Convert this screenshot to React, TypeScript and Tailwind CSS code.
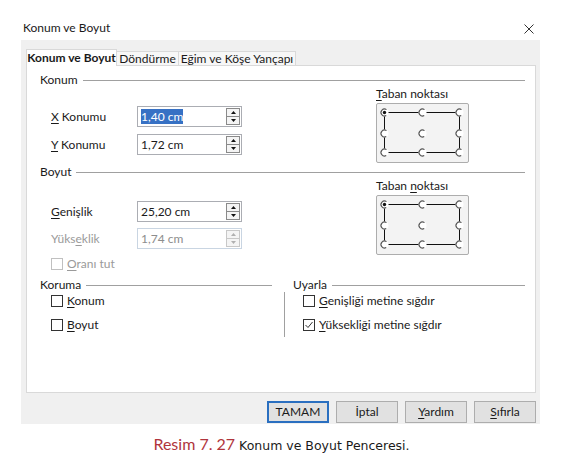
import React from "react";

const Ul = ({ children }: { children: React.ReactNode }) => (
  <span className="underline decoration-1 underline-offset-[2px]">{children}</span>
);

function Header({ label, gap }: { label: React.ReactNode; gap?: string }) {
  return (
    <div className="flex items-center h-[14px]">
      <span>{label}</span>
      <div className={"flex-1 h-px bg-[#a0a0a0] " + (gap ?? "ml-[5px]")} />
    </div>
  );
}

function SpinBox({ value, selected, disabled }: { value: string; selected?: boolean; disabled?: boolean }) {
  const bc = disabled ? "border-[#c8c8c8]" : "border-[#8a8a8a]";
  const tri = disabled ? "#b0b0b0" : "#111111";
  return (
    <div
      className={
        "w-[105px] h-[21px] bg-white border flex items-center pl-[3px] pr-[1px] " +
        (disabled ? "border-[#c9d5e2]" : "border-[#abadb3]")
      }
    >
      <span
        className={
          selected
            ? "bg-[#3771c4] text-white h-[15px] leading-[15px]"
            : disabled
            ? "text-[#8d8d8d]"
            : ""
        }
      >
        {value}
      </span>
      <div className={"ml-auto w-[14px] h-[17px] border flex flex-col bg-[#f4f4f4] " + bc}>
        <div className={"flex-1 flex items-center justify-center border-b " + bc}>
          <svg width="5" height="3" viewBox="0 0 5 3">
            <path d="M0 3L2.5 0L5 3Z" fill={tri} />
          </svg>
        </div>
        <div className="flex-1 flex items-center justify-center">
          <svg width="5" height="3" viewBox="0 0 5 3">
            <path d="M0 0L2.5 3L5 0Z" fill={tri} />
          </svg>
        </div>
      </div>
    </div>
  );
}

function Field({
  label,
  value,
  selected,
  disabled,
}: {
  label: React.ReactNode;
  value: string;
  selected?: boolean;
  disabled?: boolean;
}) {
  return (
    <div className="flex items-center h-[21px]">
      <div className={"w-[86px] " + (disabled ? "text-[#9a9a9a]" : "")}>{label}</div>
      <SpinBox value={value} selected={selected} disabled={disabled} />
    </div>
  );
}

function Radio({ cx, cy, selected }: { cx: number; cy: number; selected?: boolean }) {
  const r = 3.5;
  const a0 = (60 * Math.PI) / 180;
  const a1 = (305 * Math.PI) / 180;
  const sx = cx + r * Math.cos(a0);
  const sy = cy + r * Math.sin(a0);
  const ex = cx + r * Math.cos(a1);
  const ey = cy + r * Math.sin(a1);
  return (
    <g>
      <circle cx={cx} cy={cy} r={4} fill="#ffffff" />
      <path d={`M${sx} ${sy} A${r} ${r} 0 1 1 ${ex} ${ey}`} fill="none" stroke="#555555" strokeWidth="1.1" />
      {selected && <circle cx={cx} cy={cy} r={1.7} fill="#111111" />}
    </g>
  );
}

function Taban() {
  const xs = [7, 45, 82];
  const ys = [8, 29, 48];
  return (
    <div className="mt-[2px] w-[93px] h-[60px] border border-[#adadad] rounded-[2px] bg-[#f3f3f3]">
      <svg width="91" height="58" viewBox="0 0 91 58">
        <rect x="7.5" y="8.5" width="75" height="40" fill="none" stroke="#111111" strokeWidth="1" />
        {ys.map((y, j) =>
          xs.map((x, i) => <Radio key={`${i}-${j}`} cx={x + 0.5} cy={y + 0.5} selected={i === 0 && j === 0} />)
        )}
      </svg>
    </div>
  );
}

function Check({
  label,
  checked,
  disabled,
}: {
  label: React.ReactNode;
  checked?: boolean;
  disabled?: boolean;
}) {
  return (
    <div className="flex items-center h-[16px]">
      <div
        className={
          "w-[12px] h-[12px] border bg-white flex items-center justify-center " +
          (disabled ? "border-[#c0c0c0]" : "border-[#333333]")
        }
      >
        {checked && (
          <svg width="10" height="10" viewBox="0 0 10 10">
            <path d="M1.5 5L4 7.5L8.5 2" fill="none" stroke="#333333" strokeWidth="1" />
          </svg>
        )}
      </div>
      <span className={"ml-[4px] " + (disabled ? "text-[#9a9a9a]" : "")}>{label}</span>
    </div>
  );
}

function Button({ children, primary }: { children: React.ReactNode; primary?: boolean }) {
  return (
    <div
      className={
        "w-[62px] h-[22px] bg-[#e1e1e1] flex items-center justify-center " +
        (primary ? "border-2 border-[#2a6fc0]" : "border border-[#adadad]")
      }
    >
      {children}
    </div>
  );
}

export default function App() {
  return (
    <div className="w-[563px] h-[462px] bg-white font-['Lato',_sans-serif] text-[12px] leading-[14px] text-[#1a1a1a] overflow-hidden">
      {/* title bar */}
      <div className="h-[40px] flex items-start justify-between pl-[23px] pr-[29px] pt-[21px]">
        <span>Konum ve Boyut</span>
        <svg className="mt-[3px]" width="10" height="10" viewBox="0 0 10 10">
          <path d="M0.5 0.5L9.5 9.5M9.5 0.5L0.5 9.5" stroke="#333333" strokeWidth="1" />
        </svg>
      </div>

      {/* dialog body */}
      <div className="ml-[21px] w-[519px] h-[384px] bg-[#f0f0f0] flex flex-col pl-[5px] pr-[4px]">
        {/* tabs */}
        <div className="flex items-end pt-[9px]">
          <div className="relative z-10 -mb-px h-[17px] w-[91px] bg-white border border-b-0 border-[#d9d9d9] flex items-center justify-center font-bold">
            Konum ve Boyut
          </div>
          <div className="h-[14px] w-[62px] bg-[#f7f7f7] border border-l-0 border-b-0 border-[#d9d9d9] flex items-center justify-center">
            Döndürme
          </div>
          <div className="h-[14px] w-[117px] bg-[#f7f7f7] border border-l-0 border-b-0 border-[#d9d9d9] flex items-center justify-center">
            Eğim ve Köşe Yançapı
          </div>
        </div>

        {/* panel */}
        <div className="h-[328px] w-[510px] bg-white border border-[#d9d9d9] pl-[13px] pr-[10px] pt-[7px] flex flex-col">
          {/* Konum */}
          <Header label="Konum" />
          <div className="flex">
            <div className="w-[336px] pl-[11px] pt-[19px] flex flex-col gap-[7px]">
              <Field
                label={
                  <>
                    <Ul>X</Ul> Konumu
                  </>
                }
                value="1,40 cm"
                selected
              />
              <Field
                label={
                  <>
                    <Ul>Y</Ul> Konumu
                  </>
                }
                value="1,72 cm"
              />
            </div>
            <div className="flex flex-col">
              <div className="h-[14px]">
                <Ul>T</Ul>aban noktası
              </div>
              <Taban />
            </div>
          </div>

          {/* Boyut */}
          <div className="mt-[2px]">
            <Header label="Boyut" />
          </div>
          <div className="flex">
            <div className="w-[336px] pl-[11px] pt-[22px] flex flex-col">
              <Field
                label={
                  <>
                    <Ul>G</Ul>enişlik
                  </>
                }
                value="25,20 cm"
              />
              <div className="mt-[6px]">
                <Field
                  label={
                    <>
                      Yüks<Ul>e</Ul>klik
                    </>
                  }
                  value="1,74 cm"
                  disabled
                />
              </div>
              <div className="mt-[7px]">
                <Check
                  label={
                    <>
                      <Ul>O</Ul>ranı tut
                    </>
                  }
                  disabled
                />
              </div>
            </div>
            <div className="flex flex-col">
              <div className="h-[14px]">
                Taban <Ul>n</Ul>oktası
              </div>
              <Taban />
            </div>
          </div>

          {/* Koruma / Uyarla */}
          <div className="flex mt-[6px]">
            <div className="w-[232px] flex flex-col">
              <Header label="Koruma" />
              <div className="pl-[11px] pt-[1px] flex flex-col gap-[8px]">
                <Check
                  label={
                    <>
                      <Ul>K</Ul>onum
                    </>
                  }
                />
                <Check
                  label={
                    <>
                      <Ul>B</Ul>oyut
                    </>
                  }
                />
              </div>
            </div>
            <div className="ml-[12px] flex-1 flex flex-col">
              <div className="pl-[9px]">
                <Header label="Uyarla" />
              </div>
              <div className="border-l border-[#a0a0a0] pl-[18px] pt-[1px] pb-[4px] flex flex-col gap-[8px]">
                <Check
                  label={
                    <>
                      <Ul>G</Ul>enişliği metine sığdır
                    </>
                  }
                />
                <Check
                  label={
                    <>
                      <Ul>Y</Ul>üksekliği metine sığdır
                    </>
                  }
                  checked
                />
              </div>
            </div>
          </div>
        </div>

        {/* buttons */}
        <div className="mt-[8px] flex justify-end gap-[7px]">
          <Button primary>TAMAM</Button>
          <Button>İptal</Button>
          <Button>
            <span>
              <Ul>Y</Ul>ardım
            </span>
          </Button>
          <Button>
            <span>
              <Ul>S</Ul>ıfırla
            </span>
          </Button>
        </div>
      </div>

      {/* caption */}
      <div className="mt-[10px] flex justify-center items-baseline">
        <span className="text-[16px] leading-[20px] text-[#b0343c]">Resim 7. 27</span>
        <span className="ml-[4px] font-['DejaVu_Sans',_sans-serif] text-[12.5px] leading-[20px] text-[#1a1a1a]">
          Konum ve Boyut Penceresi.
        </span>
      </div>
    </div>
  );
}
